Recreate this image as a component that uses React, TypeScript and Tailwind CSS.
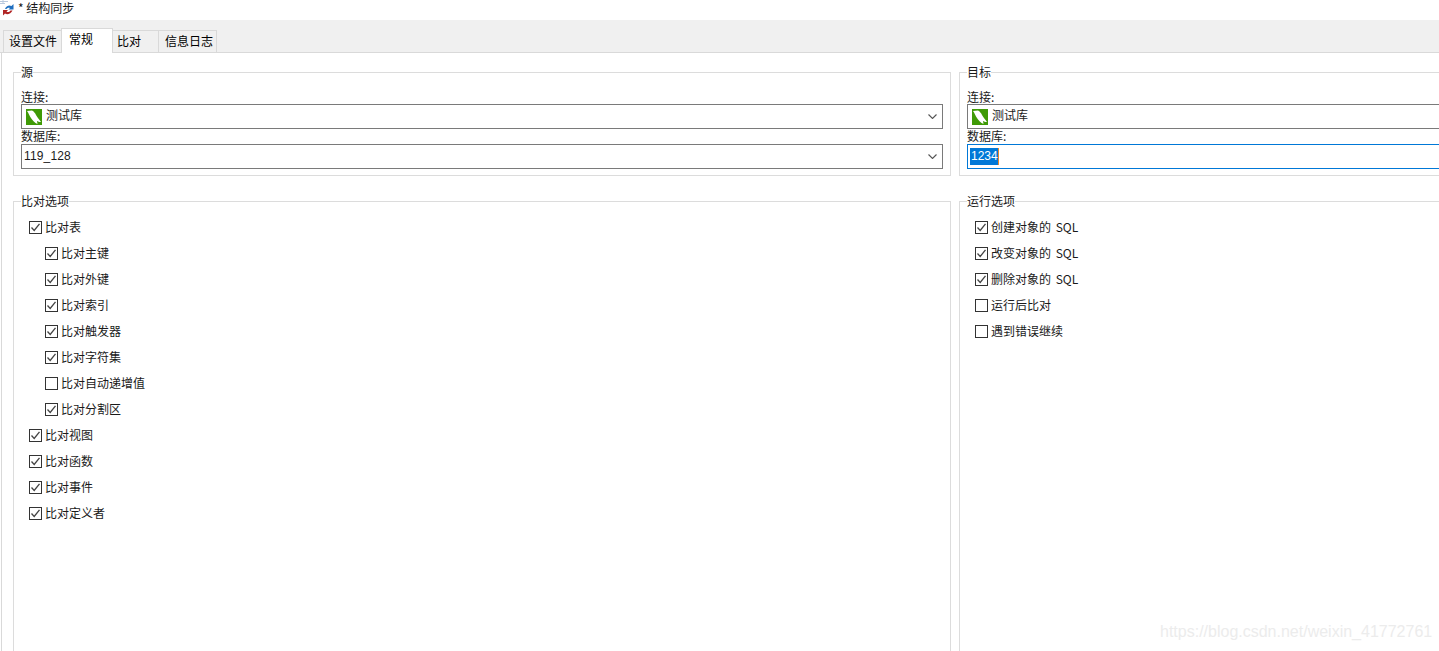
import React from "react";

const font = { fontFamily: '"Noto Sans CJK SC","Liberation Sans",sans-serif' };
const latin = { fontFamily: '"Liberation Sans",sans-serif' };

function Db() {
  return (
    <svg width="16" height="16" viewBox="0 0 16 16" className="shrink-0 ml-[2px]">
      <rect width="16" height="16" fill="#3f9a06" />
      <path d="M1 2 L6 1.5 C8 2.5 9 4 10 6 C11 8 13 10 15 13 C13 13 12 12.5 11 12 L11.5 15 C9 14 6 11 4 7.5 C3 6 3 4.5 1 2Z" fill="#fff" />
    </svg>
  );
}

function Chevron() {
  return (
    <svg width="9" height="5" viewBox="0 0 9 5" className="shrink-0">
      <path d="M0.5 0.5 L4.5 4.5 L8.5 0.5" fill="none" stroke="#555" strokeWidth="1.1" />
    </svg>
  );
}

function Check({ label, on = true, sub = false }: { label: string; on?: boolean; sub?: boolean }) {
  return (
    <div className={`flex items-center h-[26px] ${sub ? "pl-[31px]" : "pl-[15px]"}`}>
      <span className="w-[13px] h-[13px] border border-[#333] bg-white flex items-center justify-center shrink-0">
        {on && (
          <svg width="11" height="11" viewBox="0 0 11 11">
            <path d="M1.5 5.5 L4.2 8.5 L9.5 1.8" fill="none" stroke="#444" strokeWidth="1.3" />
          </svg>
        )}
      </span>
      <span className="ml-[3px] text-[12px] text-[#1a1a1a] leading-none whitespace-nowrap [word-spacing:2px]">{label}</span>
    </div>
  );
}

function Group({ title, className, children }: { title: string; className: string; children: React.ReactNode }) {
  return (
    <div className={`relative border border-[#dcdcdc] ${className}`}>
      <span className="absolute left-[7px] top-[-9px] text-[12px] leading-[16px] bg-white text-[#1a1a1a]">{title}</span>
      {children}
    </div>
  );
}

function Combo({ children, arrow = true, focus = false }: { children: React.ReactNode; arrow?: boolean; focus?: boolean }) {
  return (
    <div className={`h-[25px] border flex items-center pl-[2px] pr-[5px] ${focus ? "border-[#0078d7]" : "border-[#7a7a7a]"}`}>
      <div className="flex-1 flex items-center min-w-0 text-[12px] text-[#1a1a1a] leading-none">{children}</div>
      {arrow && <Chevron />}
    </div>
  );
}

function Tab({ label, active = false, className }: { label: string; active?: boolean; className: string }) {
  return (
    <div
      className={`text-[12px] leading-none border border-[#d9d9d9] flex ${
        active ? "bg-white border-b-0 h-[25px] pt-[4px] relative z-10" : "bg-[#f0f0f0] h-[23px] pt-[4px]"
      } ${className}`}
    >
      {label}
    </div>
  );
}

function Conn({ name, field, focus = false }: { name: string; field: React.ReactNode; focus?: boolean }) {
  return (
    <>
      <div className="text-[12px] leading-[16px] text-[#1a1a1a] mb-[-1px]">连接:</div>
      <Combo>
        <Db />
        <span className="ml-[4px] mt-[-4px]">{name}</span>
      </Combo>
      <div className="text-[12px] leading-[16px] text-[#1a1a1a] mt-[-1px]">数据库:</div>
      <Combo focus={focus}>{field}</Combo>
    </>
  );
}

export default function App() {
  const left: [string, boolean?][] = [
    ["比对主键"], ["比对外键"], ["比对索引"], ["比对触发器"], ["比对字符集"], ["比对自动递增值", false], ["比对分割区"],
  ];
  return (
    <div className="w-[1439px] h-[651px] overflow-hidden bg-white relative" style={font}>
      <div className="h-[20px] flex items-start text-[12px] text-[#1a1a1a]">
        <svg width="14" height="16" viewBox="0 0 14 16" className="shrink-0">
          <path d="M0 1.5 H8 M0 3.5 H5 M3 0 V4" stroke="#b9c9de" strokeWidth="1" fill="none" />
          <path d="M5 9 C6 6 9 4.5 11.5 6 L13.5 4 V9.5 H8.5 L10 8 C8.5 7.2 7 8 6.5 9Z" fill="#1f6fc0" />
          <path d="M12.5 10.5 C11 14 7 15 5 13.5 L3 15.5 V10 H8 L6.5 11.7 C8 12.5 9.5 12 10.5 10.5Z" fill="#b02525" />
        </svg>
        <span className="ml-[4px] leading-none mt-[2px]">* 结构同步</span>
      </div>
      <div className="h-[33px] bg-[#f0f0f0] border-b border-[#d9d9d9] flex items-end pl-[3px]">
        <Tab label="设置文件" className="w-[59px] pl-[5px] mb-[-1px]" />
        <Tab label="常规" active className="w-[52px] pl-[7px] ml-[-1px] mb-[-1px]" />
        <Tab label="比对" className="w-[47px] pl-[4px] ml-[-1px] mb-[-1px]" />
        <Tab label="信息日志" className="w-[59px] pl-[6px] ml-[-1px] mb-[-1px]" />
      </div>
      <div className="border-l border-[#d9d9d9] ml-[1px] h-[598px] pl-[11px] pt-[19px] overflow-hidden">
        <div className="flex gap-[8px] w-[1700px]">
          <Group title="源" className="w-[938px] h-[104px] px-[7px] pt-[16px]">
            <Conn name="测试库" field={<span className="text-[12px] tracking-[0.15px] mt-[-1px]" style={latin}>119_128</span>} />
          </Group>
          <Group title="目标" className="w-[700px] h-[104px] px-[7px] pt-[16px]">
            <Conn
              name="测试库"
              focus
              field={<span className="bg-[#0078d7] text-white h-[17px] leading-[17px] text-[12px] pl-[1px] border-r border-[#e8862a]" style={latin}>1234</span>}
            />
          </Group>
        </div>
        <div className="flex gap-[8px] w-[1700px] mt-[25px]">
          <Group title="比对选项" className="w-[938px] h-[500px] pt-[12px]">
            <Check label="比对表" />
            {left.map(([l, on]) => (
              <Check key={l} label={l} on={on !== false} sub />
            ))}
            <Check label="比对视图" />
            <Check label="比对函数" />
            <Check label="比对事件" />
            <Check label="比对定义者" />
          </Group>
          <Group title="运行选项" className="w-[700px] h-[500px] pt-[12px]">
            <Check label="创建对象的 SQL" />
            <Check label="改变对象的 SQL" />
            <Check label="删除对象的 SQL" />
            <Check label="运行后比对" on={false} />
            <Check label="遇到错误继续" on={false} />
          </Group>
        </div>
      </div>
      <div className="absolute left-[1160px] top-[622px] text-[16px] leading-[20px] text-[#ececec]" style={latin}>
        https://blog.csdn.net/weixin_41772761
      </div>
    </div>
  );
}
